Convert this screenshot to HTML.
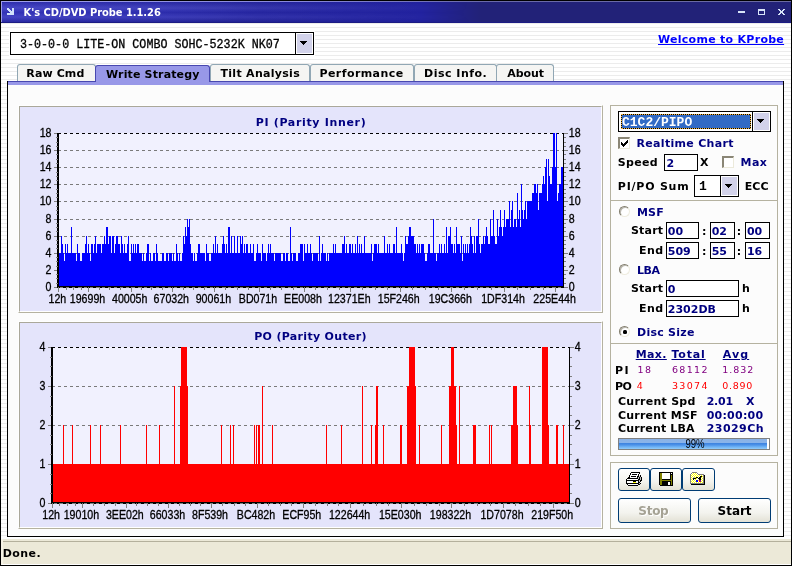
<!DOCTYPE html><html><head><meta charset="utf-8"><title>K&#39;s CD/DVD Probe 1.1.26</title><style>
*{box-sizing:border-box;margin:0;padding:0}
html,body{width:792px;height:566px;overflow:hidden}
body{position:relative;background:repeating-linear-gradient(to bottom,#fff 0,#fff 3px,#ececec 3px,#ececec 4px);font-family:'DejaVu Sans','Liberation Sans',sans-serif;font-weight:bold;font-size:11px;color:#000}
.a{position:absolute;white-space:nowrap}
.t{position:absolute;white-space:nowrap;line-height:14px;height:14px}
.nv{color:#000080}
.pu{color:#800080;font-weight:normal;font-size:9.5px}
.rd{color:#ff0000;font-weight:normal;font-size:9.5px}
.rg{color:#000080;font-weight:normal}
.lk{color:#0000ff;text-decoration:underline}
.ul{color:#000080;text-decoration:underline}
.b12{font-size:12px}
.dis{font-size:12px;color:#a5a294;text-shadow:1px 1px 0 #fff}
.ttl{color:#fff;font-family:'DejaVu Sans Condensed','DejaVu Sans','Liberation Sans',sans-serif}
.mono{font-family:'Liberation Mono',monospace;font-weight:normal;font-size:12px;line-height:16px;transform-origin:0 0;-webkit-text-stroke:.3px #000}
.monob{font-family:'Liberation Mono',monospace;font-weight:bold;font-size:13px;line-height:16px;transform-origin:0 0}
.ar{font-family:'Liberation Sans',sans-serif;font-weight:normal;font-size:12px;line-height:12px;height:12px}
.ed{position:absolute;background:#fff;border:1px solid #000}
.gb{position:absolute;border:1px solid #b5b2a0}
.tab{position:absolute;top:64px;height:17px;background:#f5f5f3;border:1px solid #91a7b4;border-bottom:none;border-radius:3px 3px 0 0}
.btn{position:absolute;border:1px solid #003c74;border-radius:3px;background:linear-gradient(to bottom,#fff 0,#f3f3ee 60%,#e3e1d5 100%)}
.cp{position:absolute;background:#e4e4fb;border:1px solid;border-color:#aaa89a #fff #fff #aaa89a}
.cpo{position:absolute;border:1px solid;border-color:#fff #b5b2a0 #b5b2a0 #fff}
.rad{position:absolute;width:11px;height:11px;border-radius:50%;background:#fff;border:1px solid;border-color:#807c6c #eeecdf #eeecdf #807c6c;box-shadow:inset 1px 1px 0 rgba(128,124,108,.55)}
.chk{position:absolute;width:12px;height:12px;background:#fff;border-style:solid;border-width:2px 1px 1px 2px;border-color:#8a8676 #eceadb #eceadb #8a8676}
.dd{position:absolute;border-left:1px solid #000;background:#fff}
.dd i{position:absolute;left:1px;top:1px;right:1px;bottom:1px;background:#d2d2ea}
</style></head><body><div id="w" style="position:absolute;left:0;top:0;width:792px;height:566px;will-change:transform">
<div class="a" style="left:1px;top:1px;width:790px;height:22px;background:linear-gradient(to right,#3636c0 0,#3030b6 150px,#2727a6 260px,#2222a0 420px,#222278 480px,#222278 100%);border-bottom:1px solid #1c1c84"></div>
<div class="a" style="left:1px;top:1px;width:790px;height:1px;background:linear-gradient(to right,#a0a0ea 0,#8888d8 300px,#6a6aa8 480px,#6a6aa0 100%)"></div><div class="a" style="left:1px;top:1px;width:1px;height:21px;background:#9c9ce8"></div>
<div class="a" style="left:2px;top:2px;width:470px;height:20px;background:linear-gradient(to bottom,rgba(0,0,40,.12) 0,rgba(255,255,255,.09) 30%,rgba(0,0,40,.06) 52%,rgba(255,255,255,.07) 75%,rgba(0,0,60,.22) 100%);-webkit-mask-image:linear-gradient(to right,#000 0,#000 45%,transparent 100%);mask-image:linear-gradient(to right,#000 0,#000 45%,transparent 100%)"></div>
<svg class="a" style="left:0;top:0" width="792" height="23" shape-rendering="crispEdges"><path d="M7 8h2v1h1v1h1v1h1v-3h2v7h-7v-2h3v-1h-1v-1h-1v-1h-1z" fill="#d0e0fa"/><rect x="738" y="11" width="7" height="2" fill="#d8e4f8"/><path d="M758 9h7v6h-7zM759 11v3h5v-3z" fill="#d8e4f8" fill-rule="evenodd"/><path d="M778 9h2v1h1v1h1v-1h1v-1h2v1h-1v1h-1v2h1v1h1v1h-2v-1h-1v-1h-1v1h-1v1h-2v-1h1v-1h1v-2h-1v-1h-1z" fill="#d8e4f8"/></svg>
<div class="a" style="left:0;top:0;width:792px;height:566px;border:1px solid #000;z-index:9"></div>
<div class="ed" style="left:10px;top:32px;width:304px;height:23px;box-shadow:0 0 0 1px #fff"></div>
<div class="a mono" style="left:19.5px;top:37px;transform:scaleX(.975)">3-0-0-0 LITE-ON COMBO SOHC-5232K NK07</div>
<div class="dd" style="left:295px;top:33px;width:18px;height:21px"><i></i></div>
<svg class="a" style="left:300px;top:41px" width="7" height="4" shape-rendering="crispEdges"><path d="M0 0h7v1h-1v1h-1v1h-1v1h-1v-1h-1v-1h-1v-1h-1z" fill="#000"/></svg>
<div class="a" style="left:7px;top:81px;width:777px;height:456px;background:#fcfcfc;border:1px solid #000;border-top:none"></div>
<div class="a" style="left:8px;top:81px;width:775px;height:4px;background:#9898e8;border-top:1px solid #4848b0"></div>
<div class="tab" style="left:17px;width:79px"></div>
<div class="tab" style="left:95px;width:115px;top:65px;height:17px;background:#9898e8;border-color:#4848b0;z-index:2"></div>
<div class="tab" style="left:210px;width:100px"></div>
<div class="tab" style="left:310px;width:104px"></div>
<div class="tab" style="left:414px;width:83px"></div>
<div class="tab" style="left:496px;width:58px"></div>
<div class="cpo" style="left:18px;top:105px;width:585px;height:208px"></div><div class="cp" style="left:19px;top:106px;width:583px;height:206px"></div><svg class="a" style="left:0;top:106px" width="610" height="208" viewBox="0 106 610 208" shape-rendering="crispEdges"><rect x="59" y="133" width="504" height="154" fill="#f1f1fe"/><path d="M58 270.5H563" stroke="#7a7a7a" stroke-dasharray="3 3" fill="none"/><path d="M58 253.5H563" stroke="#7a7a7a" stroke-dasharray="3 3" fill="none"/><path d="M58 236.5H563" stroke="#7a7a7a" stroke-dasharray="3 3" fill="none"/><path d="M58 219.5H563" stroke="#7a7a7a" stroke-dasharray="3 3" fill="none"/><path d="M58 201.5H563" stroke="#7a7a7a" stroke-dasharray="3 3" fill="none"/><path d="M58 184.5H563" stroke="#7a7a7a" stroke-dasharray="3 3" fill="none"/><path d="M58 167.5H563" stroke="#7a7a7a" stroke-dasharray="3 3" fill="none"/><path d="M58 150.5H563" stroke="#7a7a7a" stroke-dasharray="3 3" fill="none"/><path d="M58 133.5H563" stroke="#000" stroke-dasharray="3 3" fill="none"/><path d="M59 286V253H61V236H62V244H63V253H64V261H65V244H66V253H67V244H68V253H71V227H72V253H76V261H77V244H78V253H80V261H82V253H85V244H86V236H87V253H88V244H89V253H90V261H91V244H93V253H94V244H95V236H96V253H97V244H101V253H102V244H104V236H105V244H106V227H108V244H109V236H111V253H112V236H114V253H115V244H116V236H118V244H120V253H121V236H122V244H123V253H124V244H125V253H127V244H128V236H129V261H131V244H132V253H133V244H134V253H135V244H136V253H137V244H139V253H142V261H143V253H144V261H146V253H147V244H149V261H150V253H151V261H153V253H155V261H156V244H157V253H158V261H162V253H164V261H166V253H168V261H169V253H172V261H173V253H174V261H176V244H177V253H178V261H179V253H180V261H182V253H183V236H184V244H185V227H186V236H187V219H188V227H189V219H190V244H191V253H193V261H194V253H195V261H197V253H198V244H200V253H205V261H206V244H207V253H209V261H211V253H213V244H214V253H215V236H216V253H217V244H218V253H222V244H223V236H224V244H225V253H226V244H227V253H228V227H230V253H231V236H232V253H234V236H235V253H237V236H238V253H240V236H241V244H242V236H243V253H244V244H245V253H246V244H248V253H250V244H251V253H253V244H254V261H256V253H257V244H258V253H261V261H262V244H263V253H266V261H267V253H268V244H269V253H270V244H271V253H274V261H275V253H281V261H283V253H285V261H286V253H288V261H290V227H291V253H292V261H293V253H296V261H298V253H300V244H303V261H304V244H305V253H307V244H308V253H310V244H311V253H312V261H313V253H318V261H319V236H320V261H321V253H322V244H323V253H326V261H327V253H328V261H329V253H333V244H334V253H335V244H336V253H342V244H344V236H345V253H346V244H347V253H349V244H351V253H352V244H353V253H355V244H356V253H357V236H358V253H359V244H360V253H361V244H362V253H364V236H365V253H371V244H372V261H373V253H374V244H377V253H378V244H379V253H384V236H385V253H387V244H388V253H389V244H390V253H393V244H395V253H396V227H397V253H401V244H402V253H403V261H404V253H405V236H406V244H408V236H409V227H411V236H414V244H416V253H417V244H418V253H419V244H420V253H421V244H424V253H425V261H427V253H428V244H430V253H433V219H434V253H436V261H437V253H439V244H440V253H441V244H442V253H444V244H445V253H446V227H447V253H448V236H450V227H451V244H453V253H454V244H455V253H456V227H457V244H460V253H461V236H462V261H463V244H464V253H465V244H466V253H467V244H468V253H469V244H470V227H471V236H472V244H473V253H474V236H475V253H476V236H478V219H479V244H480V253H481V244H483V236H484V244H485V236H486V227H487V236H488V244H490V219H491V236H493V210H494V236H495V244H497V219H498V236H499V227H500V210H501V227H502V236H503V227H504V210H505V227H506V219H509V201H510V227H511V210H512V201H513V227H514V219H516V227H517V193H518V219H519V210H520V227H521V184H522V210H523V219H524V210H525V201H526V219H527V201H532V193H534V184H536V193H537V184H538V210H539V193H542V184H543V176H544V184H545V167H546V159H547V201H548V159H549V176H550V184H552V167H553V133H555V167H556V133H557V201H558V193H559V184H561V167H563V286Z" fill="#0000ff"/><rect x="57" y="133" width="2" height="155" fill="#000"/><rect x="563" y="133" width="1" height="155" fill="#000"/><rect x="57" y="286" width="507" height="2" fill="#000"/><path d="M60 287.5H563" stroke="#808080" stroke-dasharray="3 3" fill="none"/><path d="M54 287.5H57M564 287.5H568M56 283.5H58M564 283.5H566M56 278.5H58M564 278.5H566M56 274.5H58M564 274.5H566M54 270.5H57M564 270.5H568M56 266.5H58M564 266.5H566M56 261.5H58M564 261.5H566M56 257.5H58M564 257.5H566M54 253.5H57M564 253.5H568M56 248.5H58M564 248.5H566M56 244.5H58M564 244.5H566M56 240.5H58M564 240.5H566M54 236.5H57M564 236.5H568M56 231.5H58M564 231.5H566M56 227.5H58M564 227.5H566M56 223.5H58M564 223.5H566M54 219.5H57M564 219.5H568M56 214.5H58M564 214.5H566M56 210.5H58M564 210.5H566M56 206.5H58M564 206.5H566M54 201.5H57M564 201.5H568M56 197.5H58M564 197.5H566M56 193.5H58M564 193.5H566M56 189.5H58M564 189.5H566M54 184.5H57M564 184.5H568M56 180.5H58M564 180.5H566M56 176.5H58M564 176.5H566M56 172.5H58M564 172.5H566M54 167.5H57M564 167.5H568M56 163.5H58M564 163.5H566M56 159.5H58M564 159.5H566M56 154.5H58M564 154.5H566M54 150.5H57M564 150.5H568M56 146.5H58M564 146.5H566M56 142.5H58M564 142.5H566M56 137.5H58M564 137.5H566M54 133.5H57M564 133.5H568" stroke="#808080" fill="none"/><path d="M58.5 287V292M66.5 287V290M73.5 287V290M81.5 287V290M88.5 287V292M99.5 287V290M109.5 287V290M120.5 287V290M131.5 287V292M141.5 287V290M151.5 287V290M162.5 287V290M172.5 287V292M183.5 287V290M193.5 287V290M204.5 287V290M214.5 287V292M225.5 287V290M237.5 287V290M248.5 287V290M259.5 287V292M270.5 287V290M281.5 287V290M293.5 287V290M304.5 287V292M315.5 287V290M327.5 287V290M339.5 287V290M350.5 287V292M362.5 287V290M375.5 287V290M387.5 287V290M400.5 287V292M412.5 287V290M425.5 287V290M438.5 287V290M451.5 287V292M464.5 287V290M477.5 287V290M491.5 287V290M504.5 287V292M517.5 287V290M530.5 287V290M543.5 287V290M555.5 287V292" stroke="#808080" fill="none"/><g font-family="'Liberation Sans',sans-serif" font-size="12" fill="#000" font-weight="normal" stroke="#000" stroke-width=".3"><text transform="translate(51.5 290.8) scale(.885 1)" text-anchor="end">0</text><text transform="translate(568.8 290.8) scale(.885 1)">0</text><text transform="translate(51.5 273.8) scale(.885 1)" text-anchor="end">2</text><text transform="translate(568.8 273.8) scale(.885 1)">2</text><text transform="translate(51.5 256.8) scale(.885 1)" text-anchor="end">4</text><text transform="translate(568.8 256.8) scale(.885 1)">4</text><text transform="translate(51.5 239.8) scale(.885 1)" text-anchor="end">6</text><text transform="translate(568.8 239.8) scale(.885 1)">6</text><text transform="translate(51.5 222.8) scale(.885 1)" text-anchor="end">8</text><text transform="translate(568.8 222.8) scale(.885 1)">8</text><text transform="translate(51.5 204.8) scale(.885 1)" text-anchor="end">10</text><text transform="translate(568.8 204.8) scale(.885 1)">10</text><text transform="translate(51.5 187.8) scale(.885 1)" text-anchor="end">12</text><text transform="translate(568.8 187.8) scale(.885 1)">12</text><text transform="translate(51.5 170.8) scale(.885 1)" text-anchor="end">14</text><text transform="translate(568.8 170.8) scale(.885 1)">14</text><text transform="translate(51.5 153.8) scale(.885 1)" text-anchor="end">16</text><text transform="translate(568.8 153.8) scale(.885 1)">16</text><text transform="translate(51.5 136.8) scale(.885 1)" text-anchor="end">18</text><text transform="translate(568.8 136.8) scale(.885 1)">18</text><text transform="translate(57.4 303) scale(.885 1)" text-anchor="middle">12h</text><text transform="translate(87.5 303) scale(.885 1)" text-anchor="middle">19699h</text><text transform="translate(129.7 303) scale(.885 1)" text-anchor="middle">40005h</text><text transform="translate(171.3 303) scale(.885 1)" text-anchor="middle">67032h</text><text transform="translate(213.4 303) scale(.885 1)" text-anchor="middle">90061h</text><text transform="translate(258 303) scale(.885 1)" text-anchor="middle">BD071h</text><text transform="translate(303 303) scale(.885 1)" text-anchor="middle">EE008h</text><text transform="translate(349.3 303) scale(.885 1)" text-anchor="middle">12371Eh</text><text transform="translate(398.7 303) scale(.885 1)" text-anchor="middle">15F246h</text><text transform="translate(450.3 303) scale(.885 1)" text-anchor="middle">19C366h</text><text transform="translate(503 303) scale(.885 1)" text-anchor="middle">1DF314h</text><text transform="translate(554.6 303) scale(.885 1)" text-anchor="middle">225E44h</text></g></svg>
<div class="cpo" style="left:18px;top:321px;width:585px;height:208px"></div><div class="cp" style="left:19px;top:322px;width:583px;height:206px"></div><svg class="a" style="left:0;top:322px" width="610" height="208" viewBox="0 322 610 208" shape-rendering="crispEdges"><rect x="53" y="347" width="516" height="156" fill="#f1f1fe"/><path d="M52 464.5H569" stroke="#7a7a7a" stroke-dasharray="3 3" fill="none"/><path d="M52 425.5H569" stroke="#7a7a7a" stroke-dasharray="3 3" fill="none"/><path d="M52 386.5H569" stroke="#7a7a7a" stroke-dasharray="3 3" fill="none"/><path d="M52 347.5H569" stroke="#000" stroke-dasharray="3 3" fill="none"/><path d="M53 502V464H63V425H64V464H72V425H73V464H90V425H91V464H100V425H101V464H120V425H121V464H146V425H147V464H159V425H160V464H174V386H175V464H180V386H181V347H187V386H188V464H221V425H222V464H230V425H231V464H233V425H234V464H254V425H255V464H256V425H257V464H258V425H260V464H262V386H263V464H272V425H273V464H326V425H327V464H341V425H342V464H362V386H363V464H371V425H372V464H375V425H376V386H378V464H383V425H384V464H400V425H402V464H407V386H409V347H415V386H416V464H419V425H420V464H441V425H442V464H449V386H451V347H454V386H456V425H457V464H459V386H460V464H473V425H476V464H489V425H490V464H491V425H492V464H511V425H513V386H517V425H518V464H529V386H530V425H531V464H542V347H548V425H549V464H556V425H558V464H563V425H564V464H569V502Z" fill="#ff0000"/><rect x="51" y="347" width="2" height="157" fill="#000"/><rect x="569" y="347" width="1" height="157" fill="#000"/><rect x="51" y="502" width="519" height="2" fill="#000"/><path d="M54 503.5H569" stroke="#808080" stroke-dasharray="3 3" fill="none"/><path d="M48 503.5H51M570 503.5H574M50 493.5H52M570 493.5H572M50 484.5H52M570 484.5H572M50 474.5H52M570 474.5H572M48 464.5H51M570 464.5H574M50 454.5H52M570 454.5H572M50 444.5H52M570 444.5H572M50 435.5H52M570 435.5H572M48 425.5H51M570 425.5H574M50 415.5H52M570 415.5H572M50 406.5H52M570 406.5H572M50 396.5H52M570 396.5H572M48 386.5H51M570 386.5H574M50 376.5H52M570 376.5H572M50 366.5H52M570 366.5H572M50 357.5H52M570 357.5H572M48 347.5H51M570 347.5H574" stroke="#808080" fill="none"/><path d="M52.5 503V508M59.5 503V506M67.5 503V506M75.5 503V506M82.5 503V508M93.5 503V506M104.5 503V506M115.5 503V506M126.5 503V508M136.5 503V506M147.5 503V506M158.5 503V506M168.5 503V508M179.5 503V506M190.5 503V506M200.5 503V506M211.5 503V508M222.5 503V506M234.5 503V506M245.5 503V506M257.5 503V508M268.5 503V506M280.5 503V506M291.5 503V506M303.5 503V508M315.5 503V506M327.5 503V506M338.5 503V506M350.5 503V508M363.5 503V506M376.5 503V506M388.5 503V506M401.5 503V508M414.5 503V506M426.5 503V506M439.5 503V506M451.5 503V508M464.5 503V506M477.5 503V506M490.5 503V506M503.5 503V508M515.5 503V506M528.5 503V506M540.5 503V506M553.5 503V508" stroke="#808080" fill="none"/><g font-family="'Liberation Sans',sans-serif" font-size="12" fill="#000" font-weight="normal" stroke="#000" stroke-width=".3"><text transform="translate(45.5 506.8) scale(.885 1)" text-anchor="end">0</text><text transform="translate(574.8 506.8) scale(.885 1)">0</text><text transform="translate(45.5 467.8) scale(.885 1)" text-anchor="end">1</text><text transform="translate(574.8 467.8) scale(.885 1)">1</text><text transform="translate(45.5 428.8) scale(.885 1)" text-anchor="end">2</text><text transform="translate(574.8 428.8) scale(.885 1)">2</text><text transform="translate(45.5 389.8) scale(.885 1)" text-anchor="end">3</text><text transform="translate(574.8 389.8) scale(.885 1)">3</text><text transform="translate(45.5 350.8) scale(.885 1)" text-anchor="end">4</text><text transform="translate(574.8 350.8) scale(.885 1)">4</text><text transform="translate(51.1 519) scale(.885 1)" text-anchor="middle">12h</text><text transform="translate(81.4 519) scale(.885 1)" text-anchor="middle">19010h</text><text transform="translate(124.8 519) scale(.885 1)" text-anchor="middle">3EE02h</text><text transform="translate(167.5 519) scale(.885 1)" text-anchor="middle">66033h</text><text transform="translate(210 519) scale(.885 1)" text-anchor="middle">8F539h</text><text transform="translate(256 519) scale(.885 1)" text-anchor="middle">BC482h</text><text transform="translate(301.8 519) scale(.885 1)" text-anchor="middle">ECF95h</text><text transform="translate(349.6 519) scale(.885 1)" text-anchor="middle">122644h</text><text transform="translate(400.2 519) scale(.885 1)" text-anchor="middle">15E030h</text><text transform="translate(450.5 519) scale(.885 1)" text-anchor="middle">198322h</text><text transform="translate(502 519) scale(.885 1)" text-anchor="middle">1D7078h</text><text transform="translate(552.2 519) scale(.885 1)" text-anchor="middle">219F50h</text></g></svg>
<div class="gb" style="left:610px;top:105px;width:168px;height:351px"></div>
<div class="a" style="left:611px;top:200px;width:166px;height:1px;background:#b5b2a0"></div>
<div class="a" style="left:611px;top:343px;width:166px;height:1px;background:#b5b2a0"></div>
<div class="gb" style="left:610px;top:462px;width:168px;height:67px"></div>
<div class="ed" style="left:618px;top:111px;width:153px;height:21px"></div>
<div class="a" style="left:621px;top:114px;width:130px;height:15px;background:#316ac5;box-shadow:inset 0 0 0 1px #000;outline:1px dotted #f4b43c;outline-offset:-1px"></div>
<div class="a monob" style="left:622px;top:115px;color:#fff">C1C2/PIPO</div>
<div class="dd" style="left:752px;top:112px;width:18px;height:19px"><i></i></div>
<svg class="a" style="left:757px;top:119px" width="7" height="4" shape-rendering="crispEdges"><path d="M0 0h7v1h-1v1h-1v1h-1v1h-1v-1h-1v-1h-1v-1h-1z" fill="#000"/></svg>
<div class="chk" style="left:618px;top:137px"></div>
<svg class="a" style="left:621px;top:140px" width="7" height="7" shape-rendering="crispEdges"><path d="M0 2h1v1h1v1h1v-1h1v-1h1v-1h1v-1h1v3h-1v1h-1v1h-1v1h-1v1h-1v-1h-1v-1h-1z" fill="#000"/></svg>
<div class="ed" style="left:664px;top:154px;width:34px;height:17px"></div>
<div class="chk" style="left:722px;top:156px"></div>
<div class="ed" style="left:694px;top:175px;width:45px;height:22px"></div>
<div class="a monob" style="left:699px;top:179px">1</div>
<div class="dd" style="left:720px;top:176px;width:18px;height:20px"><i></i></div>
<svg class="a" style="left:725px;top:184px" width="7" height="4" shape-rendering="crispEdges"><path d="M0 0h7v1h-1v1h-1v1h-1v1h-1v-1h-1v-1h-1v-1h-1z" fill="#000"/></svg>
<div class="rad" style="left:619px;top:206px"></div>
<div class="ed" style="left:666px;top:222px;width:33px;height:17px"></div>
<div class="ed" style="left:710px;top:222px;width:25px;height:17px"></div>
<div class="ed" style="left:745px;top:222px;width:25px;height:17px"></div>
<div class="ed" style="left:666px;top:242px;width:33px;height:17px"></div>
<div class="ed" style="left:710px;top:242px;width:25px;height:17px"></div>
<div class="ed" style="left:745px;top:242px;width:25px;height:17px"></div>
<div class="rad" style="left:619px;top:264px"></div>
<div class="ed" style="left:666px;top:280px;width:73px;height:17px"></div>
<div class="ed" style="left:666px;top:300px;width:73px;height:17px"></div>
<div class="rad" style="left:619px;top:326px"><div class="a" style="left:3px;top:3px;width:4px;height:4px;border-radius:1.5px;background:#000"></div></div>
<div class="a" style="left:618px;top:438px;width:152px;height:12px;border:1px solid #808080;background:#fff"><div class="a" style="left:0;top:0;width:148px;height:10px;background:linear-gradient(to bottom,#8ab2e6 0,#8ab4ea 36%,#3f84e0 44%,#4a90e8 58%,#6cb0f4 78%,#92ccfa 100%)"></div></div>
<div class="a ar" style="left:618.5px;top:438px;width:152px;text-align:center;transform:scaleX(.8)">99%</div>
<div class="btn" style="left:618px;top:468px;width:32px;height:23px"></div>
<div class="btn" style="left:650px;top:468px;width:32px;height:23px"></div>
<div class="btn" style="left:682px;top:468px;width:33px;height:23px"></div>
<svg class="a" style="left:626px;top:472px" width="16" height="14" shape-rendering="crispEdges"><path d="M5 0h9v1h-9zM4 1h1v1h-1zM13 1h1v1h-1zM4 2h1v1h-1zM6 2h5v1h-5zM12 2h1v1h-1zM3 3h1v1h-1zM12 3h1v1h-1zM14 3h1v1h-1zM3 4h1v1h-1zM5 4h5v1h-5zM11 4h2v1h-2zM14 4h1v1h-1zM2 5h2v1h-2zM11 5h1v1h-1zM13 5h1v1h-1zM15 5h1v1h-1zM1 6h11v1h-11zM13 6h1v1h-1zM15 6h1v1h-1zM0 7h1v1h-1zM12 7h2v1h-2zM15 7h1v1h-1zM0 8h13v1h-13zM14 8h2v1h-2zM0 9h1v1h-1zM7 9h3v1h-3zM12 9h1v1h-1zM14 9h1v1h-1zM0 10h1v1h-1zM12 10h2v1h-2zM0 11h13v1h-13zM14 11h1v1h-1zM1 12h1v1h-1zM12 12h2v1h-2zM2 13h10v1h-10z" fill="#000"/><path d="M5 1h8v1h-8zM5 2h1v1h-1zM11 2h1v1h-1zM4 3h8v1h-8zM4 4h1v1h-1zM10 4h1v1h-1zM4 5h7v1h-7zM1 7h11v1h-11zM1 9h6v1h-6zM10 9h2v1h-2zM1 10h6v1h-6zM10 10h2v1h-2zM2 12h10v1h-10z" fill="#fff"/><path d="M13 4h1v1h-1zM12 5h1v1h-1zM14 5h1v1h-1zM12 6h1v1h-1zM14 6h1v1h-1zM14 7h1v1h-1zM13 8h1v1h-1zM13 9h1v1h-1zM13 11h1v1h-1z" fill="#c0c0c0"/><path d="M7 10h3v1h-3z" fill="#ffff00"/></svg><svg class="a" style="left:659px;top:472px" width="14" height="14" shape-rendering="crispEdges"><path d="M0 0h14v1h-14zM0 1h1v1h-1zM11 1h1v1h-1zM13 1h1v1h-1zM0 2h1v1h-1zM11 2h3v1h-3zM0 3h1v1h-1zM11 3h1v1h-1zM13 3h1v1h-1zM0 4h1v1h-1zM11 4h1v1h-1zM13 4h1v1h-1zM0 5h1v1h-1zM11 5h1v1h-1zM13 5h1v1h-1zM0 6h1v1h-1zM11 6h1v1h-1zM13 6h1v1h-1zM0 7h1v1h-1zM3 7h9v1h-9zM13 7h1v1h-1zM0 8h1v1h-1zM13 8h1v1h-1zM0 9h1v1h-1zM3 9h9v1h-9zM13 9h1v1h-1zM0 10h1v1h-1zM3 10h6v1h-6zM11 10h1v1h-1zM13 10h1v1h-1zM0 11h1v1h-1zM3 11h6v1h-6zM11 11h1v1h-1zM13 11h1v1h-1zM0 12h1v1h-1zM3 12h6v1h-6zM11 12h1v1h-1zM13 12h1v1h-1zM1 13h13v1h-13z" fill="#000"/><path d="M1 1h2v1h-2zM1 2h2v1h-2zM1 3h2v1h-2zM12 3h1v1h-1zM1 4h2v1h-2zM12 4h1v1h-1zM1 5h2v1h-2zM12 5h1v1h-1zM1 6h2v1h-2zM12 6h1v1h-1zM1 7h2v1h-2zM12 7h1v1h-1zM1 8h12v1h-12zM1 9h2v1h-2zM12 9h1v1h-1zM1 10h2v1h-2zM12 10h1v1h-1zM1 11h2v1h-2zM12 11h1v1h-1zM1 12h2v1h-2zM12 12h1v1h-1z" fill="#808000"/><path d="M3 1h8v1h-8zM12 1h1v1h-1zM3 2h8v1h-8zM3 3h8v1h-8zM3 4h8v1h-8zM3 5h8v1h-8zM3 6h8v1h-8zM9 10h2v1h-2zM9 11h2v1h-2zM9 12h2v1h-2z" fill="#fff"/></svg><svg class="a" style="left:690px;top:472px" width="15" height="13" shape-rendering="crispEdges"><path d="M2 0h5v1h-5zM1 1h1v1h-1zM7 1h1v1h-1zM0 2h1v1h-1zM8 2h6v1h-6zM0 3h1v1h-1zM13 3h1v1h-1zM0 4h1v1h-1zM13 4h1v1h-1zM0 5h1v1h-1zM13 5h1v1h-1zM0 6h1v1h-1zM13 6h1v1h-1zM0 7h1v1h-1zM13 7h1v1h-1zM0 8h1v1h-1zM13 8h1v1h-1zM0 9h1v1h-1zM13 9h1v1h-1zM0 10h1v1h-1zM13 10h1v1h-1zM0 11h14v1h-14z" fill="#808080"/><path d="M2 1h1v1h-1zM4 1h1v1h-1zM6 1h1v1h-1zM1 2h1v1h-1zM3 2h1v1h-1zM5 2h1v1h-1zM7 2h1v1h-1zM2 3h1v1h-1zM4 3h1v1h-1zM6 3h1v1h-1zM8 3h1v1h-1zM10 3h1v1h-1zM12 3h1v1h-1zM1 4h1v1h-1zM3 4h1v1h-1zM5 4h1v1h-1zM7 4h1v1h-1zM9 4h1v1h-1zM2 5h1v1h-1zM8 5h1v1h-1zM12 5h1v1h-1zM1 6h1v1h-1zM7 6h1v1h-1zM11 6h1v1h-1zM2 7h1v1h-1zM4 7h1v1h-1zM8 7h1v1h-1zM12 7h1v1h-1zM1 8h1v1h-1zM3 8h1v1h-1zM5 8h1v1h-1zM11 8h1v1h-1zM2 9h1v1h-1zM4 9h1v1h-1zM8 9h1v1h-1zM12 9h1v1h-1zM1 10h1v1h-1zM3 10h1v1h-1zM5 10h1v1h-1zM7 10h1v1h-1zM9 10h1v1h-1zM11 10h1v1h-1z" fill="#fff"/><path d="M3 1h1v1h-1zM5 1h1v1h-1zM2 2h1v1h-1zM4 2h1v1h-1zM6 2h1v1h-1zM1 3h1v1h-1zM3 3h1v1h-1zM5 3h1v1h-1zM7 3h1v1h-1zM9 3h1v1h-1zM11 3h1v1h-1zM2 4h1v1h-1zM4 4h1v1h-1zM6 4h1v1h-1zM8 4h1v1h-1zM12 4h1v1h-1zM1 5h1v1h-1zM5 5h1v1h-1zM11 5h1v1h-1zM2 6h1v1h-1zM6 6h1v1h-1zM12 6h1v1h-1zM1 7h1v1h-1zM5 7h1v1h-1zM11 7h1v1h-1zM2 8h1v1h-1zM4 8h1v1h-1zM8 8h1v1h-1zM12 8h1v1h-1zM1 9h1v1h-1zM3 9h1v1h-1zM5 9h1v1h-1zM11 9h1v1h-1zM2 10h1v1h-1zM4 10h1v1h-1zM6 10h1v1h-1zM8 10h1v1h-1zM10 10h1v1h-1zM12 10h1v1h-1z" fill="#ffff00"/><path d="M14 3h1v1h-1zM10 4h2v1h-2zM14 4h1v1h-1zM6 5h2v1h-2zM9 5h2v1h-2zM14 5h1v1h-1zM3 6h3v1h-3zM8 6h3v1h-3zM14 6h1v1h-1zM3 7h1v1h-1zM9 7h2v1h-2zM14 7h1v1h-1zM14 8h1v1h-1zM14 9h1v1h-1zM14 10h1v1h-1zM14 11h1v1h-1zM1 12h14v1h-14z" fill="#000"/><path d="M3 5h2v1h-2z" fill="#c0c0c0"/><path d="M6 7h2v1h-2z" fill="#fff"/><path d="M6 8h2v1h-2zM6 9h2v1h-2z" fill="#0000ff"/><path d="M9 8h1v1h-1zM9 9h1v1h-1z" fill="#ff0000"/><path d="M10 8h1v1h-1zM10 9h1v1h-1z" fill="#800080"/></svg>
<div class="btn" style="left:618px;top:498px;width:73px;height:25px"></div>
<div class="btn" style="left:698px;top:498px;width:73px;height:25px"></div>
<div class="a" style="left:1px;top:539px;width:790px;height:26px;background:#ece9d8;border-bottom:1px solid #fff;border-left:2px solid #f6f3e6"><div class="a" style="left:0;top:2px;width:788px;height:1px;background:#b4b09c"></div></div>
<div class="t ttl" style="left:23.60px;top:6px;letter-spacing:-0.03px;">K's CD/DVD Probe 1.1.26</div>
<div class="t lk" style="left:658.00px;top:33px;letter-spacing:0.28px;">Welcome to KProbe</div>
<div class="t" style="left:26.30px;top:67px;letter-spacing:0.12px;">Raw Cmd</div>
<div class="t" style="left:106.00px;top:68px;letter-spacing:0.15px;z-index:3;">Write Strategy</div>
<div class="t" style="left:220.50px;top:67px;letter-spacing:0.29px;">Tilt Analysis</div>
<div class="t" style="left:319.50px;top:67px;letter-spacing:0.42px;">Performance</div>
<div class="t" style="left:424.00px;top:67px;letter-spacing:0.50px;">Disc Info.</div>
<div class="t" style="left:507.30px;top:67px;letter-spacing:-0.08px;">About</div>
<div class="t nv" style="left:255.70px;top:116px;letter-spacing:0.67px;">PI (Parity Inner)</div>
<div class="t nv" style="left:254.20px;top:330px;letter-spacing:0.32px;">PO (Parity Outer)</div>
<div class="t nv" style="left:636.60px;top:137px;letter-spacing:0.30px;">Realtime Chart</div>
<div class="t" style="left:617.80px;top:156px;letter-spacing:0.30px;">Speed</div>
<div class="t nv" style="left:666.50px;top:157px;">2</div>
<div class="t" style="left:700.00px;top:156px;">X</div>
<div class="t nv" style="left:740.60px;top:156px;letter-spacing:0.35px;">Max</div>
<div class="t" style="left:617.80px;top:180px;letter-spacing:0.78px;">PI/PO Sum</div>
<div class="t" style="left:744.70px;top:180px;letter-spacing:0.15px;">ECC</div>
<div class="t nv" style="left:637.00px;top:206px;letter-spacing:0.15px;">MSF</div>
<div class="t" style="left:631.00px;top:224px;letter-spacing:0.20px;">Start</div>
<div class="t" style="left:638.90px;top:244px;letter-spacing:0.55px;">End</div>
<div class="t nv" style="left:667.80px;top:225px;">00</div>
<div class="t nv" style="left:711.70px;top:225px;">02</div>
<div class="t nv" style="left:746.90px;top:225px;">00</div>
<div class="t" style="left:701.90px;top:225px;">:</div>
<div class="t" style="left:736.70px;top:225px;">:</div>
<div class="t nv" style="left:667.80px;top:245px;">509</div>
<div class="t nv" style="left:711.70px;top:245px;">55</div>
<div class="t nv" style="left:746.90px;top:245px;">16</div>
<div class="t" style="left:701.90px;top:245px;">:</div>
<div class="t" style="left:736.70px;top:245px;">:</div>
<div class="t nv" style="left:637.00px;top:264px;letter-spacing:-0.40px;">LBA</div>
<div class="t" style="left:631.00px;top:282px;letter-spacing:0.20px;">Start</div>
<div class="t" style="left:638.90px;top:302px;letter-spacing:0.55px;">End</div>
<div class="t nv" style="left:667.80px;top:283px;">0</div>
<div class="t nv" style="left:667.80px;top:303px;">2302DB</div>
<div class="t" style="left:742.00px;top:282px;">h</div>
<div class="t" style="left:742.00px;top:302px;">h</div>
<div class="t nv" style="left:637.00px;top:326px;letter-spacing:0.25px;">Disc Size</div>
<div class="t ul" style="left:635.70px;top:348px;letter-spacing:0.37px;">Max.</div>
<div class="t ul" style="left:671.50px;top:348px;letter-spacing:0.82px;">Total</div>
<div class="t ul" style="left:722.70px;top:348px;letter-spacing:1.10px;">Avg</div>
<div class="t" style="left:615.00px;top:364px;letter-spacing:1.50px;">PI</div>
<div class="t" style="left:615.00px;top:380px;letter-spacing:-0.60px;">PO</div>
<div class="t pu" style="left:637.40px;top:363px;letter-spacing:1.50px;">18</div>
<div class="t pu" style="left:671.90px;top:363px;letter-spacing:1.35px;">68112</div>
<div class="t pu" style="left:722.20px;top:363px;letter-spacing:1.00px;">1.832</div>
<div class="t rd" style="left:636.80px;top:379px;">4</div>
<div class="t rd" style="left:671.90px;top:379px;letter-spacing:1.35px;">33074</div>
<div class="t rd" style="left:722.20px;top:379px;letter-spacing:0.75px;">0.890</div>
<div class="t" style="left:618.00px;top:395px;letter-spacing:0.25px;">Current Spd</div>
<div class="t" style="left:618.00px;top:409px;letter-spacing:0.20px;">Current MSF</div>
<div class="t" style="left:618.00px;top:422px;letter-spacing:0.15px;">Current LBA</div>
<div class="t nv" style="left:706.70px;top:395px;letter-spacing:-0.23px;">2.01</div>
<div class="t nv" style="left:745.90px;top:395px;">X</div>
<div class="t nv" style="left:706.70px;top:409px;letter-spacing:0.24px;">00:00:00</div>
<div class="t nv" style="left:706.70px;top:422px;letter-spacing:0.45px;">23029Ch</div>
<div class="t dis" style="left:638.30px;top:504px;letter-spacing:-0.27px;">Stop</div>
<div class="t b12" style="left:717.60px;top:504px;letter-spacing:-0.03px;">Start</div>
<div class="t" style="left:2.80px;top:547px;letter-spacing:0.40px;">Done.</div>
</div></body></html>
